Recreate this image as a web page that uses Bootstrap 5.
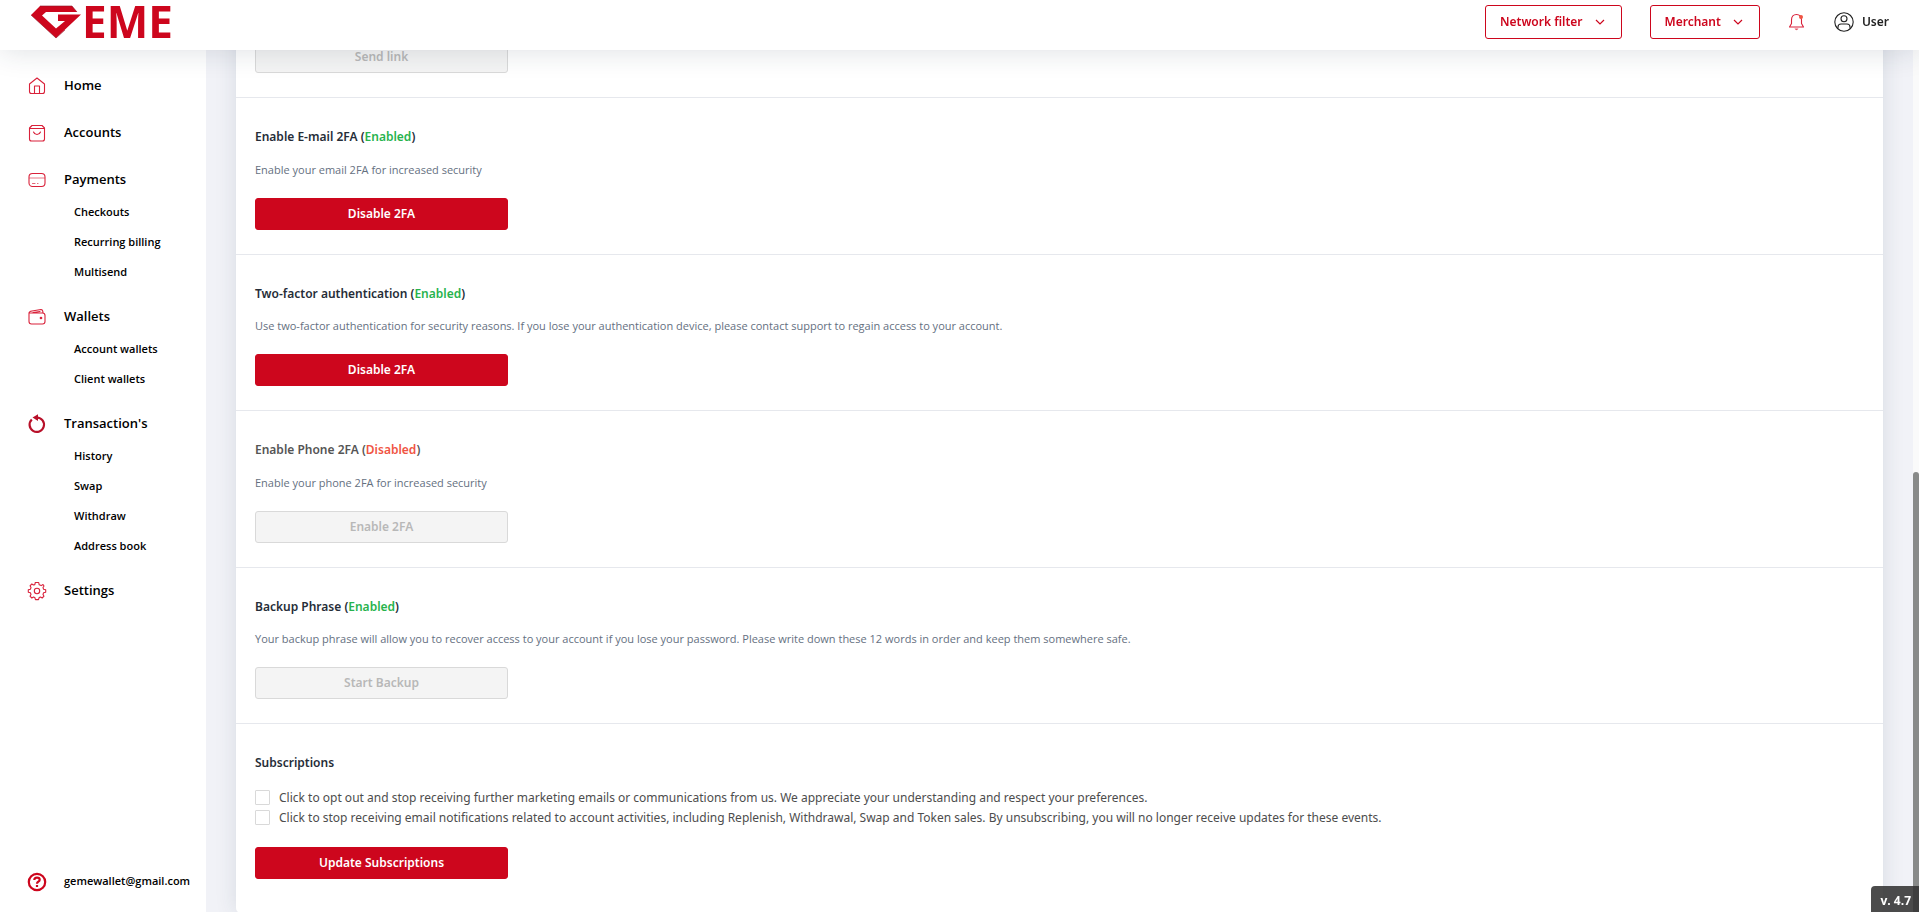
<!DOCTYPE html>
<html lang="en">
<head>
<meta charset="utf-8">
<meta name="viewport" content="width=device-width, initial-scale=1">
<title>GEME - Settings</title>
<link rel="stylesheet" href="https://cdn.jsdelivr.net/npm/bootstrap@5.3.0/dist/css/bootstrap.min.css">
<style>
  :root { --geme: #cd061d; --geme-icon: #d9213a; }
  body { background: #f1f2f7; font-family: "Noto Sans", "Open Sans", sans-serif; font-size: 12px; color: #4d4d4d; overflow: hidden; }
  .topbar { height: 50px; background: #fff; box-shadow: 0 0 30px rgba(31, 51, 71, .16); padding: 0 30px 6px; }
  .brand-logo { display: block; }
  .brand-name { font: 700 44px "Open Sans", sans-serif; fill: var(--geme); }
  .top-actions { gap: 28px; }
  .top-btn { height: 34px; border: 1px solid var(--geme); border-radius: 3px; color: var(--geme); font-size: 12px; font-weight: 600; padding: 0 16px 0 14px; line-height: 20px; }
  .top-btn:hover { background: var(--geme); color: #fff; }
  .top-user { color: #222; font-weight: 600; }
  .sidebar { width: 206px; background: #fff; font-family: "Open Sans", sans-serif; padding: 68px 0 13px; z-index: 1; }
  .side-list { display: flex; flex-direction: column; gap: 12px; }
  .side-link { display: flex; align-items: center; gap: 17px; height: 35px; padding-left: 27px; color: #000; font-size: 13px; font-weight: 600; text-decoration: none; }
  .side-link svg { width: 20px; height: 20px; flex: none; }
  .side-sub { display: flex; align-items: center; height: 30px; padding-left: 74px; color: #000; font-size: 11px; font-weight: 600; text-decoration: none; }
  .side-mail { font-size: 11px; }
  .line-icon { fill: none; stroke: var(--geme-icon); stroke-width: 1.1; stroke-linecap: round; stroke-linejoin: round; }
  .main-area { padding: 0 36px 0 30px; }
  .panel { background: #fff; border-radius: 0 0 5px 5px; box-shadow: 0 0 22px rgba(31, 61, 71, .12); }
  .panel-sec { padding: 29px 19px 24px; border-top: 1px solid #e6e8ed; }
  .panel-sec:first-child { border: 0; padding-top: 41px; }
  .panel-sec:last-child { padding-bottom: 34px; }
  .sec-title { font-size: 12px; line-height: 1.625; font-weight: 600; color: #262d38; margin: 0 0 14px; }
  .sec-title.off { color: #555; }
  .sec-text { font: 11px/17px "Open Sans", sans-serif; color: #65707f; margin: 0 0 20px; }
  .on-state { color: #27b34d; }
  .off-state { color: #f05443; }
  .act-btn { display: block; width: 253px; height: 32px; padding: 0; border-radius: 3px; font-size: 12px; font-weight: 600; line-height: 20px; color: #fff; background: var(--geme); border: 1px solid var(--geme); }
  .act-btn:hover { background: #b10519; color: #fff; }
  .act-btn:disabled { color: #b8b8b8; background: #f4f4f4; border-color: #d9d9d9; opacity: 1; }
  .opt-list { padding: 1px 0 19px; }
  .opt { height: 20px; gap: 9px; }
  .opt-box { appearance: none; width: 15px; height: 15px; margin: 0; border: 1px solid #d9d9d9; border-radius: 1px; background: #fff; flex: none; }
  .opt-box:checked { background: var(--geme); }
  .scroll-rail { top: 50px; width: 6px; background: #fafafa; }
  .scroll-thumb { height: 51%; background: #888a89; border-radius: 3px 3px 0 0; }
  .version { background: rgba(51, 51, 51, .88); color: #fff; font: 700 12px/22px "Open Sans", sans-serif; padding: 4px 8px 0 9px; border-top-left-radius: 4px; z-index: 1040; }
</style>
</head>
<body>
<header class="topbar fixed-top d-flex align-items-center justify-content-between">
  <a href="#" aria-label="GEME">
    <svg class="brand-logo overflow-visible" width="160" height="44" viewBox="30 0 160 44">
      <path d="M40 6H72L77 12H46L42 15.500L56 28.500L65 21H58V14.500H81L56 38L31 15Z" fill="#cd061d"/>
      <path d="M40 6H72L77 12M31 15L56 38L65 30" fill="none" stroke="#8d1425" stroke-width=".6"/>
      <text x="82" y="38" class="brand-name">EME</text>
    </svg>
  </a>
  <div class="top-actions d-flex align-items-center">
    <button type="button" class="btn top-btn d-flex align-items-center gap-2">Network filter
      <svg class="ms-1" width="10" height="10" viewBox="0 0 10 10"><path d="M1 3L5 7L9 3" fill="none" stroke="currentColor" stroke-width="1.2"/></svg>
    </button>
    <button type="button" class="btn top-btn d-flex align-items-center gap-2">Merchant
      <svg class="ms-1" width="10" height="10" viewBox="0 0 10 10"><path d="M1 3L5 7L9 3" fill="none" stroke="currentColor" stroke-width="1.2"/></svg>
    </button>
    <a href="#" aria-label="Notifications">
      <svg class="d-block" width="18" height="20" viewBox="0 0 18 20"><path class="line-icon" d="M3.500 11.500V8C3.500 4.500 5.500 2.500 8.500 2.500C11.500 2.500 13.500 4.500 13.500 8V11.500L15.500 15H1.500Z"/><path d="M6.500 16.500H10.500Q8.500 20 6.500 16.500" fill="#e4586a"/><circle cx="13" cy="5" r="2" fill="#f05443"/></svg>
    </a>
    <a href="#" class="top-user d-flex align-items-center text-decoration-none">
      <svg class="me-2" width="20" height="20" viewBox="0 0 20 20" fill="none" stroke="#222" stroke-width="1.100"><circle cx="10" cy="10" r="9.200"/><circle cx="10" cy="6.800" r="3"/><path d="M4 16.500V15Q4 12 7 12H13Q16 12 16 15V16.500"/></svg>
      User
    </a>
  </div>
</header>

<div class="d-flex vh-100">
  <aside class="sidebar d-flex flex-column justify-content-between flex-shrink-0">
    <nav class="side-list">
      <a class="side-link" href="#"><svg class="line-icon" viewBox="0 0 20 20"><path d="M2.500 8L10 2L17.500 8V15.500Q17.500 17.500 15.500 17.500H4.500Q2.500 17.500 2.500 15.500ZM7.500 17V10H12.500V17"/></svg>Home</a>
      <a class="side-link" href="#"><svg class="line-icon" viewBox="0 0 20 20"><path d="M2.500 5L5 2.500H15L17.500 5V16Q17.500 18 15.500 18H4.500Q2.500 18 2.500 16ZM2.500 5.500H17.500M6.500 9Q7.500 11.500 10 11.500Q12.500 11.500 13.500 9"/></svg>Accounts</a>
      <div>
        <a class="side-link" href="#"><svg class="line-icon" viewBox="0 0 20 20"><rect x="2" y="3.500" width="16" height="13" rx="3.500"/><path d="M2.500 8H17.500" stroke-opacity=".6"/><path d="M5.500 13.500H8M10.500 13.500H11" stroke-opacity=".7"/></svg>Payments</a>
        <a class="side-sub" href="#">Checkouts</a>
        <a class="side-sub" href="#">Recurring billing</a>
        <a class="side-sub" href="#">Multisend</a>
      </div>
      <div>
        <a class="side-link" href="#"><svg class="line-icon" viewBox="0 0 20 20"><path d="M2.500 6H15.500Q18 6 18 8.500V14.500Q18 17 15.500 17H4.500Q2 17 2 14.500V6Q2 4.500 5 4L14 2.500Q16 2.500 16 6M6 5.500L13 4.500"/><circle cx="14" cy="11" r=".8" fill="#d9213a"/></svg>Wallets</a>
        <a class="side-sub" href="#">Account wallets</a>
        <a class="side-sub" href="#">Client wallets</a>
      </div>
      <div>
        <a class="side-link" href="#"><svg viewBox="0 0 20 20"><path d="M4.800 5.500A7.200 7.200 0 1 0 10 3.500" fill="none" stroke="#b81029" stroke-width="2.200"/><path d="M5.500 3.500L11 .2V7Z" fill="#b81029"/></svg>Transaction's</a>
        <a class="side-sub" href="#">History</a>
        <a class="side-sub" href="#">Swap</a>
        <a class="side-sub" href="#">Withdraw</a>
        <a class="side-sub" href="#">Address book</a>
      </div>
      <a class="side-link" href="#"><svg class="line-icon" viewBox="0 0 20 20"><path d="M8.300 1.500H11.700L12.200 3.800L14.200 4.600L16 3.500L17 5L16 6.500L16.600 8.300L18.700 8.800V11.200L16.600 11.700L16 13.500L17 15.200L15.200 17L13.500 16L12.200 16.500L11.500 18.600H8.500L7.800 16.500L6.500 16L4.800 17L3 15.200L4 13.500L3.400 11.700L1.300 11.200V8.800L3.400 8.300L4 6.500L3 4.800L4.800 3L6.500 4L7.800 3.600Z"/><circle cx="10" cy="10" r="2.700"/></svg>Settings</a>
    </nav>
    <a class="side-link side-mail" href="mailto:gemewallet@gmail.com"><svg viewBox="0 0 20 20" fill="none" stroke="#cd061d" stroke-width="2.200"><circle cx="10" cy="10" r="8.200"/><path d="M7.300 8Q7.300 5.600 10 5.600Q12.700 5.600 12.700 7.800Q12.700 9 11.200 9.700Q10 10.300 10 11.800M10 13V15"/></svg>gemewallet@gmail.com</a>
  </aside>

  <main class="main-area flex-grow-1">
    <div class="panel">
      <section class="panel-sec">
        <button type="button" class="btn act-btn" disabled>Send link</button>
      </section>
      <section class="panel-sec">
        <h2 class="sec-title">Enable E-mail 2FA (<span class="on-state">Enabled</span>)</h2>
        <p class="sec-text">Enable your email 2FA for increased security</p>
        <button type="button" class="btn act-btn">Disable 2FA</button>
      </section>
      <section class="panel-sec">
        <h2 class="sec-title">Two-factor authentication (<span class="on-state">Enabled</span>)</h2>
        <p class="sec-text">Use two-factor authentication for security reasons. If you lose your authentication device, please contact support to regain access to your account.</p>
        <button type="button" class="btn act-btn">Disable 2FA</button>
      </section>
      <section class="panel-sec">
        <h2 class="sec-title off">Enable Phone 2FA (<span class="off-state">Disabled</span>)</h2>
        <p class="sec-text">Enable your phone 2FA for increased security</p>
        <button type="button" class="btn act-btn" disabled>Enable 2FA</button>
      </section>
      <section class="panel-sec">
        <h2 class="sec-title">Backup Phrase (<span class="on-state">Enabled</span>)</h2>
        <p class="sec-text">Your backup phrase will allow you to recover access to your account if you lose your password. Please write down these 12 words in order and keep them somewhere safe.</p>
        <button type="button" class="btn act-btn" disabled>Start Backup</button>
      </section>
      <section class="panel-sec">
        <h2 class="sec-title">Subscriptions</h2>
        <div class="opt-list">
          <div class="opt d-flex align-items-center">
            <input class="opt-box" type="checkbox" id="optMarketing">
            <label for="optMarketing">Click to opt out and stop receiving further marketing emails or communications from us. We appreciate your understanding and respect your preferences.</label>
          </div>
          <div class="opt d-flex align-items-center">
            <input class="opt-box" type="checkbox" id="optActivity">
            <label for="optActivity">Click to stop receiving email notifications related to account activities, including Replenish, Withdrawal, Swap and Token sales. By unsubscribing, you will no longer receive updates for these events.</label>
          </div>
        </div>
        <button type="button" class="btn act-btn">Update Subscriptions</button>
      </section>
    </div>
  </main>
</div>

<div class="scroll-rail position-fixed end-0 bottom-0 d-flex flex-column justify-content-end"><div class="scroll-thumb"></div></div>
<div class="version position-fixed end-0 bottom-0">v. 4.7</div>
<script src="https://cdn.jsdelivr.net/npm/bootstrap@5.3.0/dist/js/bootstrap.bundle.min.js"></script>
</body>
</html>
